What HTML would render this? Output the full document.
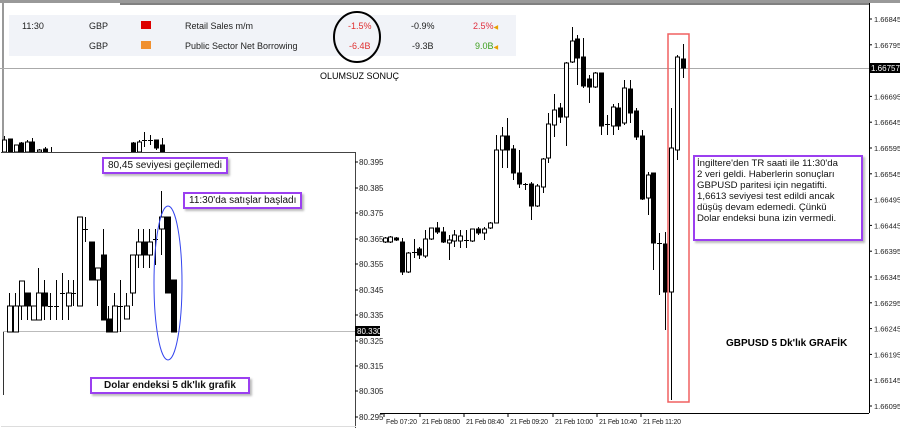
<!DOCTYPE html>
<html><head><meta charset="utf-8"><style>
body{margin:0;width:900px;height:428px;overflow:hidden;background:#fff;font-family:"Liberation Sans",sans-serif;position:relative}
.t{position:absolute;font-size:9px;color:#222;white-space:nowrap}
.box{position:absolute;border:2px solid #9b3ff0;background:#fff;font-size:10px;color:#111;box-shadow:2px 2px 2px #bbb;white-space:nowrap}
</style></head><body>
<svg id="s" width="900" height="428" style="position:absolute;left:0;top:0" font-family="Liberation Sans, sans-serif" font-size="8">
<rect x="0" y="0" width="900" height="428" fill="#fff"/>
<line x1="0" y1="1.5" x2="900" y2="1.5" stroke="#999" stroke-width="3"/>
<line x1="3" y1="3" x2="3" y2="155" stroke="#333"/>
<line x1="869.5" y1="3" x2="869.5" y2="413" stroke="#000"/>
<line x1="120" y1="4" x2="869" y2="4" stroke="#000"/>
<line x1="380" y1="413.5" x2="869" y2="413.5" stroke="#000"/>
<line x1="0" y1="68.5" x2="869" y2="68.5" stroke="#aaa"/>
<rect x="9" y="15" width="507" height="41" fill="#f1f3f8"/>
<g id="main"></g>
<g id="tp"></g>
<rect x="668" y="34" width="21" height="368" fill="none" stroke="#f06060" stroke-width="1.5"/>
<!-- left panel -->
<rect x="1" y="152" width="354" height="276" fill="#fff"/>
<line x1="1" y1="152.5" x2="356" y2="152.5" stroke="#444"/>
<line x1="355.5" y1="152" x2="355.5" y2="428" stroke="#444"/>
<line x1="1" y1="426.5" x2="356" y2="426.5" stroke="#ddd"/>
<line x1="3.5" y1="331" x2="3.5" y2="395" stroke="#333"/>
<line x1="3" y1="331.5" x2="355" y2="331.5" stroke="#bbb"/>
<g id="left"></g>
<ellipse cx="168" cy="283" rx="14" ry="77" fill="none" stroke="#3344ee"/>
<rect x="355" y="326" width="25" height="10" fill="#000"/>
<text x="357" y="334" fill="#fff">80.330</text>
<rect x="870" y="63" width="30" height="10" fill="#000"/>
<text x="871" y="71" fill="#fff">1.66757</text>
<g id="ax"></g>
<ellipse cx="357" cy="37" rx="23" ry="25" fill="none" stroke="#000" stroke-width="2"/>
</svg>
<div class="t" style="left:22px;top:21px">11:30</div>
<div class="t" style="left:89px;top:21px">GBP</div>
<div style="position:absolute;left:141px;top:21px;width:10px;height:8px;background:#d00"></div>
<div class="t" style="left:185px;top:21px">Retail Sales m/m</div>
<div class="t" style="left:348px;top:21px;color:#e03030">-1.5%</div>
<div class="t" style="left:411px;top:21px">-0.9%</div>
<div class="t" style="left:473px;top:21px;color:#e03040">2.5%<span style="color:#e8a000;font-size:6px">◀</span></div>
<div class="t" style="left:89px;top:41px">GBP</div>
<div style="position:absolute;left:141px;top:41px;width:10px;height:8px;background:#f09030"></div>
<div class="t" style="left:185px;top:41px">Public Sector Net Borrowing</div>
<div class="t" style="left:349px;top:41px;color:#e03030">-6.4B</div>
<div class="t" style="left:412px;top:41px">-9.3B</div>
<div class="t" style="left:475px;top:41px;color:#40a020">9.0B<span style="color:#e8a000;font-size:6px">◀</span></div>
<div class="t" style="left:320px;top:71px;font-size:9px;color:#000">OLUMSUZ SONUÇ</div>
<div class="box" style="left:102px;top:157px;padding:1px 4px">80,45 seviyesi geçilemedi</div>
<div class="box" style="left:183px;top:192px;padding:1px 4px">11:30'da satışlar başladı</div>
<div class="box" style="left:90px;top:377px;padding:1px 12px;font-weight:bold;font-size:10px">Dolar endeksi 5 dk'lık grafik</div>
<div class="box" style="left:693px;top:155px;width:162px;height:80px;padding:1px 2px;line-height:11px;font-size:9.6px">İngiltere'den TR saati ile 11:30'da<br>2 veri geldi. Haberlerin sonuçları<br>GBPUSD paritesi için negatifti.<br>1,6613 seviyesi test edildi ancak<br>düşüş devam edemedi. Çünkü<br>Dolar endeksi buna izin vermedi.</div>
<div class="t" style="left:726px;top:338px;font-weight:bold;font-size:10px;color:#000">GBPUSD 5 Dk'lık GRAFİK</div>
<script>
function cs(g,arr,w){var h='';arr.forEach(function(c){var x=c[0],hi=c[1],t=c[2],b=c[3],lo=c[4],k=c[5];
h+='<line x1="'+(x+.5)+'" y1="'+hi+'" x2="'+(x+.5)+'" y2="'+lo+'" stroke="#000"/>';
if(b-t<1.5)h+='<line x1="'+(x-2)+'" y1="'+t+'.5" x2="'+(x+3)+'" y2="'+t+'.5" stroke="#000"/>';
else h+='<rect x="'+(x-1.5)+'" y="'+t+'" width="'+w+'" height="'+(b-t)+'" fill="'+(k?'#000':'#fff')+'" stroke="#000" stroke-width="1"/>';});
document.getElementById(g).innerHTML=h;}
cs('main',[[385,237,238,242,243,0],[390,236,237,242,243,0],[396,237,238,240,241,1],[402,238,242,272,275,1],[408,252,253,272,273,0],[414,239,252,252,258,0],[419,247,249,255,259,1],[425,230,239,256,258,0],[431,228,228,239,240,0],[437,222,228,232,234,1],[443,227,232,242,243,1],[449,235,240,243,260,0],[454,230,235,241,247,0],[460,230,236,241,248,0],[466,230,240,240,248,0],[472,229,229,241,242,0],[478,227,229,233,235,1],[484,227,229,233,240,0],[490,222,223,228,229,0],[496,135,150,223,223,0],[502,127,136,150,168,0],[507,118,136,150,168,1],[513,145,149,173,180,1],[519,150,173,184,188,1],[525,183,184,184,190,0],[531,182,184,206,220,1],[537,184,186,206,207,0],[543,158,159,187,193,0],[548,113,124,158,163,0],[554,94,110,125,137,0],[560,103,108,117,123,1],[566,62,63,117,146,0],[572,27,41,62,63,0],[577,35,39,58,85,1],[583,38,57,86,88,1],[589,75,79,87,103,1],[595,72,73,87,88,0],[601,73,73,126,135,1],[607,115,124,124,135,0],[613,104,107,126,135,0],[618,103,108,126,130,1],[624,80,88,123,125,0],[630,80,89,113,123,1],[636,108,111,137,140,1],[642,130,136,199,200,1],[648,172,175,198,215,0],[653,173,173,243,270,1],[659,233,243,243,295,0],[665,232,244,292,330,1],[671,108,148,292,400,0],[677,55,57,150,160,0],[683,44,59,68,78,1]],4);
cs('left',[[9,293,306,332,332,0],[15,293,306,332,332,0],[21,281,281,306,320,0],[27,293,293,306,320,1],[33,306,306,320,320,0],[38,268,293,320,320,0],[44,280,293,306,320,1],[50,293,306,306,320,0],[56,280,306,306,320,0],[62,273,293,293,320,0],[68,280,293,306,320,0],[73,280,293,293,306,0],[79,217,217,306,306,0],[85,217,229,229,242,0],[91,242,242,280,280,1],[97,268,268,280,306,0],[103,229,255,320,320,1],[108,306,319,332,332,1],[114,293,306,332,332,0],[120,280,306,306,332,0],[126,293,306,319,319,0],[132,255,255,293,306,0],[138,229,242,255,268,0],[143,229,242,255,268,1],[149,229,242,255,268,0],[155,229,239,239,265,0],[161,191,217,229,255,0],[167,217,217,293,293,1],[173,280,280,332,332,1]],5);
cs('tp',[[4,136,140,152,152,0],[10,139,139,152,152,1],[16,145,145,152,152,0],[21,142,143,152,152,1],[27,140,142,152,152,0],[32,138,142,152,152,1],[39,149,150,152,152,0],[45,147,149,152,152,1],[51,147,152,152,152,0],[133,142,143,152,152,1],[139,140,142,152,152,0],[144,132,140,140,147,0],[150,135,140,140,145,0],[156,140,140,148,150,1],[162,138,145,152,152,1]],4);
var h='',L=[["80.395",165],["80.385",191],["80.375",216],["80.365",242],["80.355",267],["80.345",293],["80.335",318],["80.325",344],["80.315",369],["80.305",394],["80.295",420]];
L.forEach(function(a){h+='<line x1="355" y1="'+(a[1]-3)+'" x2="358" y2="'+(a[1]-3)+'" stroke="#000"/><text x="359" y="'+a[1]+'" fill="#222">'+a[0]+'</text>';});
var v=1.66845;for(var i=0;i<16;i++){var y=22+i*25.8;if(i!=2){h+='<line x1="869" y1="'+(y-3)+'" x2="872" y2="'+(y-3)+'" stroke="#000"/><text x="874" y="'+y+'" fill="#222" font-size="7.5">'+(v-i*0.0005).toFixed(5)+'</text>';}}
var D=[[386,"Feb 07:20"],[422,"21 Feb 08:00"],[466,"21 Feb 08:40"],[510,"21 Feb 09:20"],[555,"21 Feb 10:00"],[599,"21 Feb 10:40"],[643,"21 Feb 11:20"]];
D.forEach(function(d){h+='<line x1="'+(d[0]-2)+'" y1="413" x2="'+(d[0]-2)+'" y2="417" stroke="#000"/><text x="'+d[0]+'" y="424" fill="#222" font-size="7" textLength="'+(d[1].length>9?38:31)+'">'+d[1]+'</text>';});
document.getElementById('ax').innerHTML=h;
</script>
</body></html>
